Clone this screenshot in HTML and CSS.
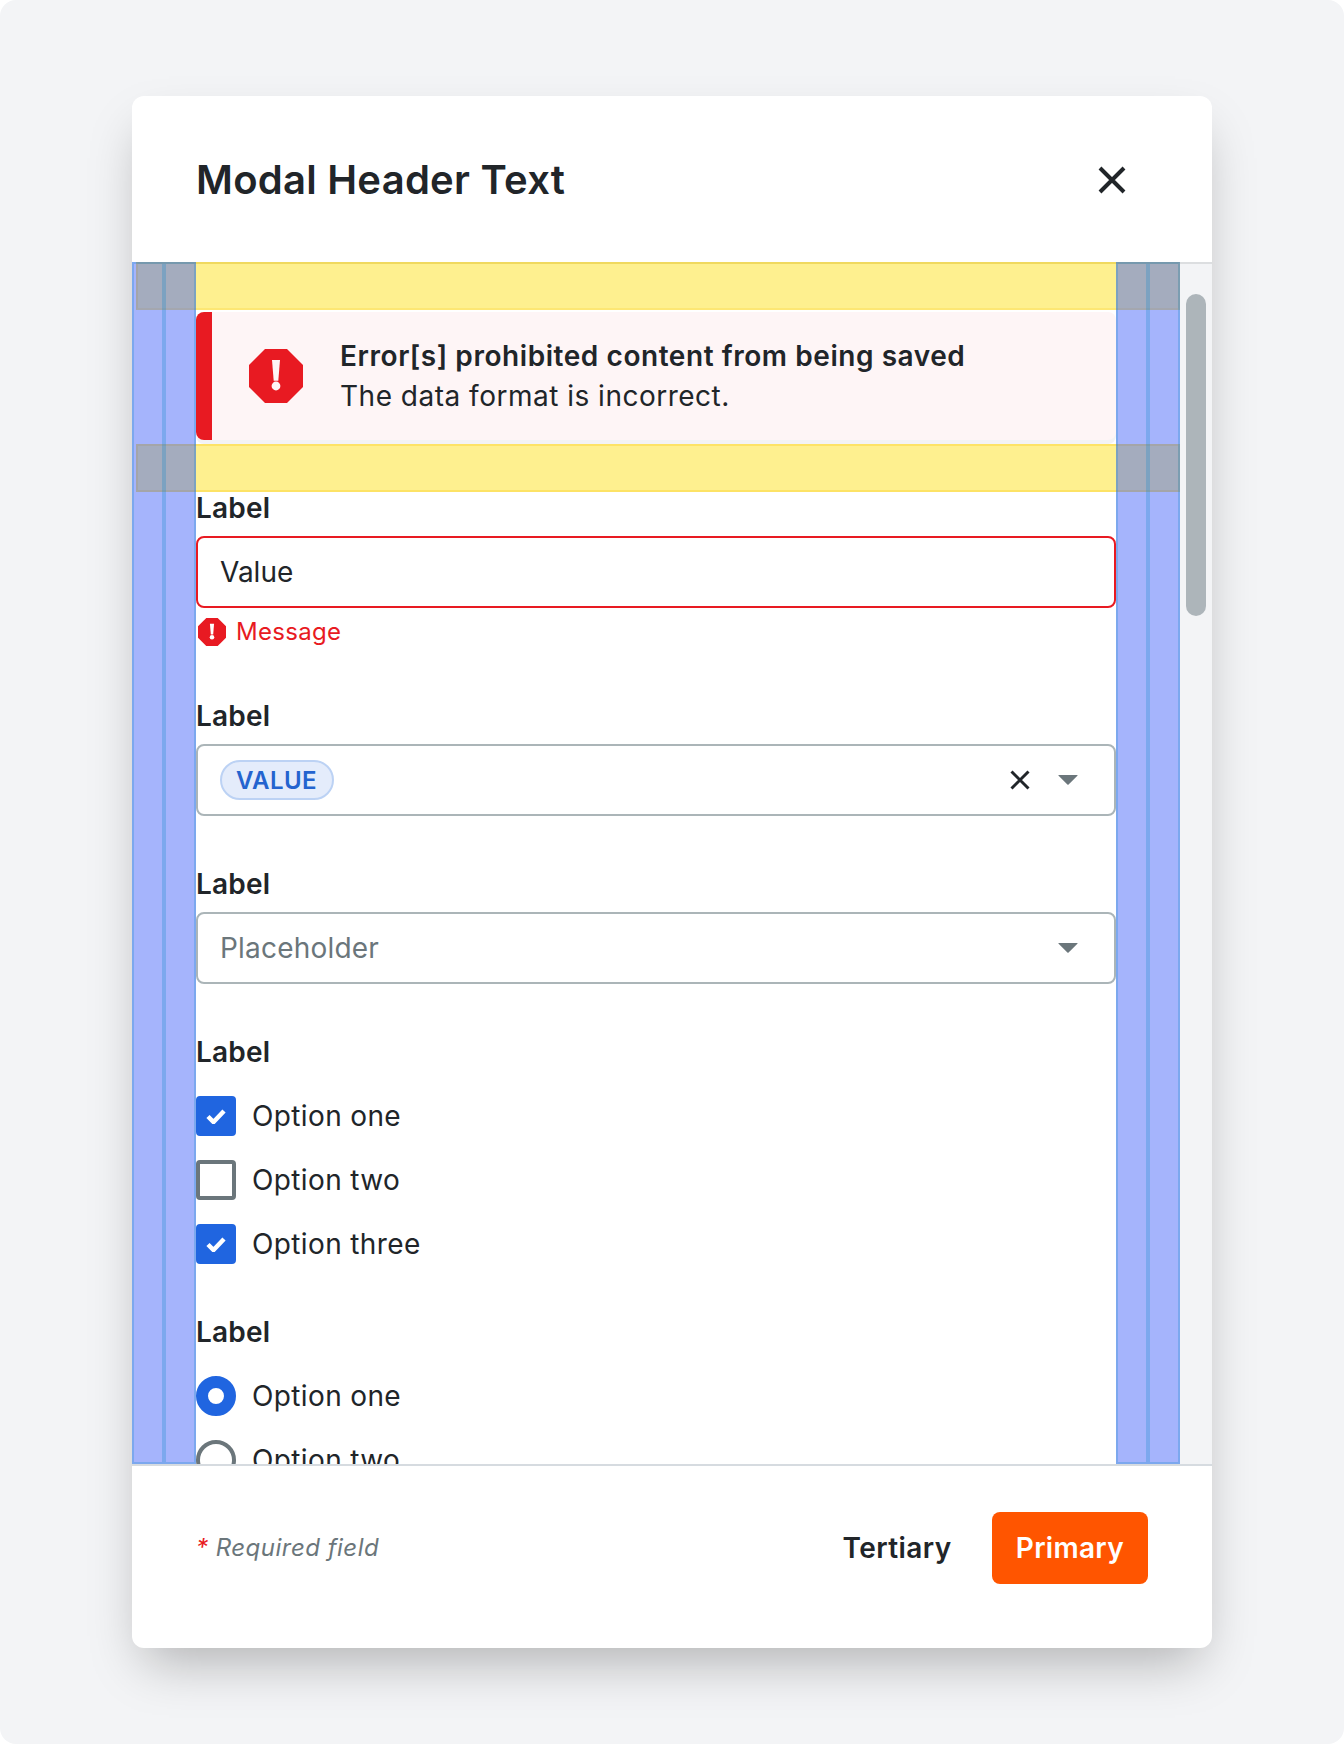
FILE: index.html
```html
<!DOCTYPE html>
<html lang="en">
<head>
<meta charset="utf-8">
<title>Modal</title>
<link rel="stylesheet" href="styles.css">
</head>
<body>
<div class="page">
  <div class="modal">
    <header class="modal-header">
      <h1 class="modal-title">Modal Header Text</h1>
      <svg class="close-icon" viewBox="0 0 28 28"><path d="M2 2 26 26M26 2 2 26"/></svg>
    </header>
    <div class="scroll">
      <div class="spacer-band spacer-band-first"></div>
      <div class="alert">
        <div class="alert-bar"></div>
        <svg class="alert-icon" viewBox="0 0 54 54"><polygon class="octagon" points="16,0 38,0 54,16 54,38 38,54 16,54 0,38 0,16"/><polygon class="bang" points="23,11 31,11 29.3,31.7 24.7,31.7"/><circle class="bang" cx="27" cy="37" r="4.4"/></svg>
        <div class="alert-text">
          <div class="alert-title">Error[s] prohibited content from being saved</div>
          <div class="alert-body">The data format is incorrect.</div>
        </div>
      </div>
      <div class="spacer-band"></div>

      <div class="field">
        <div class="label">Label</div>
        <div class="input input-error">Value</div>
        <div class="message">
          <svg class="message-icon" viewBox="0 0 54 54"><polygon class="octagon" points="16,0 38,0 54,16 54,38 38,54 16,54 0,38 0,16"/><polygon class="bang-white" points="23,11 31,11 29.3,31.7 24.7,31.7"/><circle class="bang-white" cx="27" cy="37" r="4.4"/></svg>
          <span>Message</span>
        </div>
      </div>

      <div class="field">
        <div class="label">Label</div>
        <div class="input">
          <span class="chip">VALUE</span>
          <span class="input-actions">
            <svg class="clear-icon" viewBox="0 0 20 20"><path d="M1.5 1.5 18.5 18.5M18.5 1.5 1.5 18.5"/></svg>
            <svg class="caret" viewBox="0 0 20 10"><path d="M0.8 0H19.2Q20 0 19.4 0.7L10.6 9.6Q10 10 9.4 9.6L0.6 0.7Q0 0 0.8 0Z"/></svg>
          </span>
        </div>
      </div>

      <div class="field">
        <div class="label">Label</div>
        <div class="input placeholder">
          <span>Placeholder</span>
          <span class="input-actions">
            <svg class="caret" viewBox="0 0 20 10"><path d="M0.8 0H19.2Q20 0 19.4 0.7L10.6 9.6Q10 10 9.4 9.6L0.6 0.7Q0 0 0.8 0Z"/></svg>
          </span>
        </div>
      </div>

      <div class="field">
        <div class="label">Label</div>
        <div class="options">
          <div class="option"><span class="box box-on"><svg viewBox="0 0 20 16"><path d="M2 8.5 7.5 14 18 3"/></svg></span>Option one</div>
          <div class="option"><span class="box"></span>Option two</div>
          <div class="option"><span class="box box-on"><svg viewBox="0 0 20 16"><path d="M2 8.5 7.5 14 18 3"/></svg></span>Option three</div>
        </div>
      </div>

      <div class="field">
        <div class="label">Label</div>
        <div class="options">
          <div class="option"><span class="radio radio-on"></span>Option one</div>
          <div class="option"><span class="radio"></span>Option two</div>
        </div>
      </div>

      <div class="guide guide-left"><div class="guide-col"></div><div class="guide-col"></div></div>
      <div class="guide guide-right"><div class="guide-col"></div><div class="guide-col"></div></div>
      <div class="track"><div class="thumb"></div></div>
    </div>
    <footer class="modal-footer">
      <div class="required"><span class="star">*</span> Required field</div>
      <div class="actions">
        <button class="btn btn-tertiary">Tertiary</button>
        <button class="btn btn-primary">Primary</button>
      </div>
    </footer>
  </div>
</div>
</body>
</html>
```

FILE: styles.css
```css
* { box-sizing: border-box; }
html, body { margin: 0; padding: 0; background: #fff; }
body { font-family: "Inter", "Liberation Sans", sans-serif; color: #212529; }

.page {
  width: 1344px;
  height: 1744px;
  padding: 96px 132px;
  background: #f3f4f6;
  border-radius: 16px;
}
.modal {
  width: 1080px;
  height: 1552px;
  display: flex;
  flex-direction: column;
  background: #fff;
  border-radius: 12px;
  box-shadow: 0 25px 50px -12px rgba(0, 0, 0, 0.28);
  overflow: hidden;
}
.modal-header {
  height: 166px;
  flex: none;
  display: flex;
  align-items: center;
  justify-content: space-between;
  padding: 2px 86px 0 64px;
}
.modal-title { margin: 0; font-size: 40px; line-height: 48px; font-weight: 600; letter-spacing: 0.26px; }
.close-icon { width: 28px; height: 28px; fill: none; stroke: #212529; stroke-width: 4; }

.scroll {
  position: relative;
  height: 1202px;
  flex: none;
  padding: 0 96px 0 64px;
  overflow: hidden;
}
.spacer-band {
  height: 48px;
  margin: 0 -64px 0 -60px;
  background: #fef08f;
  border: 2px solid #fde366;
}
.spacer-band-first { border-top-color: #f0d95f; border-bottom-color: #fde774; }

.alert {
  display: flex;
  align-items: center;
  height: 128px;
  margin: 2px 0 4px;
  background: #fef5f6;
  border-radius: 8px;
  box-shadow: 0 4px 0 #f3f3f4;
  overflow: hidden;
}
.alert-bar { width: 16px; height: 100%; background: #e81a22; flex: none; }
.alert-icon { width: 54px; height: 54px; margin: 0 37px 0 37px; flex: none; }
.octagon { fill: #e81a22; }
.bang { fill: #fef5f6; }
.bang-white { fill: #fff; }
.alert-title { font-size: 28px; line-height: 40px; font-weight: 600; letter-spacing: 0.56px; }
.alert-body { font-size: 28px; line-height: 40px; letter-spacing: 0.5px; }

.field { margin-bottom: 52px; }
.label { font-size: 28px; line-height: 32px; font-weight: 600; letter-spacing: 0.22px; height: 32px; }
.input {
  display: flex;
  align-items: center;
  justify-content: space-between;
  height: 72px;
  margin-top: 12px;
  padding: 0 22px;
  border: 2px solid #abb5b8;
  border-radius: 8px;
  font-size: 28px;
}
.input-error { border-color: #e81a22; }
.placeholder { color: #6b767b; letter-spacing: 0.2px; }
.input-actions { display: flex; align-items: center; gap: 28px; margin-right: 14px; }
.clear-icon { width: 20px; height: 20px; fill: none; stroke: #212529; stroke-width: 3; }
.caret { width: 20px; height: 10px; fill: #6b767b; display: block; }

.chip {
  display: inline-flex;
  align-items: center;
  height: 40px;
  padding: 0 15px 0 14px;
  background: #e4ecfb;
  border: 2px solid #bcd2f4;
  border-radius: 20px;
  color: #2464cf;
  font-size: 24px;
  font-weight: 600;
  letter-spacing: 0.44px;
}

.message {
  display: flex;
  align-items: center;
  gap: 10px;
  height: 33px;
  margin-top: 7px;
  padding: 0 0 1px 2px;
  color: #e81a22;
  font-size: 24px;
  letter-spacing: 0.3px;
}
.message-icon { width: 28px; height: 28px; flex: none; margin-top: 2px; }

.options { display: flex; flex-direction: column; gap: 24px; margin-top: 28px; }
.option { display: flex; align-items: center; gap: 16px; height: 40px; font-size: 28px; letter-spacing: 0.37px; }
.box {
  width: 40px;
  height: 40px;
  flex: none;
  display: flex;
  align-items: center;
  justify-content: center;
  border: 4px solid #6b767b;
  border-radius: 4px;
}
.box-on { background: #2065e0; border-color: #2065e0; }
.box svg { width: 20px; height: 16px; fill: none; stroke: #fff; stroke-width: 4.5; }
.radio { width: 40px; height: 40px; flex: none; border: 4px solid #6b767b; border-radius: 50%; }
.radio-on { border: 12px solid #2065e0; background: #fff; }

.guide { position: absolute; top: 0; bottom: 0; width: 64px; display: flex; }
.guide-left { left: 0; }
.guide-right { right: 32px; }
.guide-col {
  width: 32px;
  height: 100%;
  background: rgba(55, 88, 248, 0.45);
  background-clip: padding-box;
  border: 2px solid rgba(37, 110, 227, 0.6);
}
.track {
  position: absolute;
  top: 0;
  right: 0;
  bottom: 0;
  width: 32px;
  background: #f3f4f6;
  border-top: 2px solid #dcdee0;
}
.thumb {
  width: 20px;
  height: 322px;
  margin: 30px 0 0 6px;
  background: #adb5ba;
  border-radius: 10px;
}

.modal-footer {
  flex: 1;
  display: flex;
  align-items: center;
  justify-content: space-between;
  padding: 46px 64px 64px 64px;
  border-top: 2px solid #d6dbe0;
}
.required { margin-top: -2px; color: #6b767b; font-size: 24px; font-style: italic; letter-spacing: 0.48px; }
.star { color: #e81a22; }
.actions { display: flex; gap: 16px; }
.btn {
  height: 72px;
  padding: 0 24px;
  border: 0;
  border-radius: 8px;
  font-family: inherit;
  font-size: 28px;
  font-weight: 600;
}
.btn-tertiary { background: transparent; color: #212529; letter-spacing: 0.45px; }
.btn-primary { background: #ff5500; color: #fff; letter-spacing: 0.3px; }
```
